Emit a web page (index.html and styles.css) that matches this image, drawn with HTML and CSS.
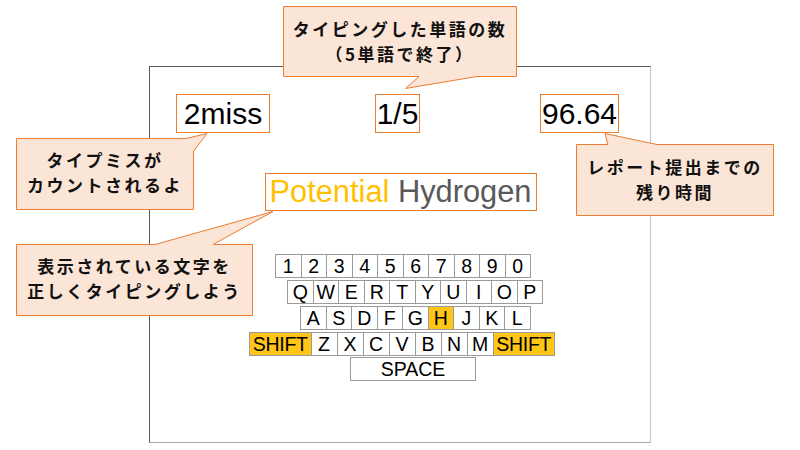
FILE: index.html
```html
<!DOCTYPE html>
<html lang="ja">
<head>
<meta charset="utf-8">
<title>Typing</title>
<link rel="stylesheet" href="styles.css">
</head>
<body>
<div class="stage">
  <div class="frame">
    <div class="stats">
      <div class="stat stat-miss">2miss</div>
      <div class="stat stat-count">1/5</div>
      <div class="stat stat-time">96.64</div>
    </div>
    <div class="word-wrap">
      <div class="word"><span class="typed">Potential</span> <span class="rest">Hydrogen</span></div>
    </div>
    <div class="keyboard">
      <div class="row row1">
        <div class="key">1</div><div class="key">2</div><div class="key">3</div><div class="key">4</div><div class="key">5</div><div class="key">6</div><div class="key">7</div><div class="key">8</div><div class="key">9</div><div class="key">0</div>
      </div>
      <div class="row row2">
        <div class="key">Q</div><div class="key">W</div><div class="key">E</div><div class="key">R</div><div class="key">T</div><div class="key">Y</div><div class="key">U</div><div class="key">I</div><div class="key">O</div><div class="key">P</div>
      </div>
      <div class="row row3">
        <div class="key">A</div><div class="key">S</div><div class="key">D</div><div class="key">F</div><div class="key">G</div><div class="key on">H</div><div class="key">J</div><div class="key">K</div><div class="key">L</div>
      </div>
      <div class="row row4">
        <div class="key shift on">SHIFT</div><div class="key wide">Z</div><div class="key wide">X</div><div class="key wide">C</div><div class="key wide">V</div><div class="key wide">B</div><div class="key wide">N</div><div class="key wide">M</div><div class="key shift on">SHIFT</div>
      </div>
      <div class="row row5">
        <div class="key space">SPACE</div>
      </div>
    </div>
  </div>

  <svg class="tails" width="800" height="450" viewBox="0 0 800 450">
    <path d="M283.5 6.5 H516.5 V76.5 H477 L405.5 88.5 L419 76.5 H283.5 Z"/>
    <path d="M16.5 138.5 H186 L207 133.5 L193.5 151 V209.5 H16.5 Z"/>
    <path d="M576.5 144.5 H608 L605 133.5 L657 144.5 H773.5 V215.5 H576.5 Z"/>
    <path d="M16.5 244.5 H155 L273 211.5 L213 244.5 H252.5 V315.5 H16.5 Z"/>
  </svg>

  <div class="note note-top">タイピングした単語の数<br>（5単語で終了）</div>
  <div class="note note-miss">タイプミスが<br>カウントされるよ</div>
  <div class="note note-time">レポート提出までの<br>残り時間</div>
  <div class="note note-word">表示されている文字を<br>正しくタイピングしよう</div>
</div>
</body>
</html>
```

FILE: styles.css
```css
* { box-sizing: border-box; }
html, body { margin: 0; padding: 0; background: #fff; }
body { font-family: "Liberation Sans", Arial, sans-serif; color: #000; }

.stage { position: relative; width: 800px; height: 450px; overflow: hidden; }

.frame {
  margin: 66px 0 0 149px;
  width: 502px;
  height: 377px;
  border-top: 1px solid #5a5a5a;
  border-left: 1px solid #5a5a5a;
  border-right: 1px solid #c4c4c4;
  border-bottom: 1px solid #a6a6a6;
  padding-top: 27px;
}

.stats {
  display: grid;
  grid-template-columns: 1fr auto 1fr;
  align-items: start;
  padding: 0 31px 0 26px;
}
.stat {
  height: 39px;
  border: 1px solid #ed7d31;
  background: #fff;
  font-size: 30px;
  line-height: 37px;
  text-align: center;
  white-space: nowrap;
}
.stat-miss { justify-self: start; width: 94px; }
.stat-count { justify-self: center; width: 45px; }
.stat-time { justify-self: end; width: 79px; }

.word-wrap { display: flex; justify-content: center; margin-top: 40px; padding-left: 1px; }
.word {
  width: 272px;
  height: 38px;
  border: 1px solid #ed7d31;
  font-size: 30.8px;
  line-height: 35px;
  text-align: center;
  white-space: nowrap;
}
.typed { color: #ffc000; }
.rest { color: #595959; }

.keyboard { margin-top: 43px; display: flex; flex-direction: column; gap: 2px; }
.row { display: flex; height: 24px; }
.row1 { margin-left: 125px; }
.row2 { margin-left: 137px; }
.row3 { margin-left: 150px; }
.row4 { margin-left: 99px; }
.row5 { margin-left: 200px; margin-top: -1px; }

.key {
  width: 26.5px;
  height: 24px;
  border: 1px solid #9a9a9a;
  background: #fff;
  font-size: 19.5px;
  line-height: 23px;
  text-align: center;
  flex: none;
}
.key + .key { margin-left: -1px; }
.key.wide { width: 27px; }
.key.shift { width: 62.5px; letter-spacing: -0.3px; }
.key.space { width: 126px; }
.key.on { background: #ffc517; }

.tails { position: absolute; left: 0; top: 0; }
.tails path { fill: #fbe5d6; stroke: #ed7d31; stroke-width: 1; stroke-linejoin: miter; }

.note {
  position: absolute;
  display: flex;
  align-items: center;
  justify-content: center;
  text-align: center;
  font-family: "Noto Sans CJK JP", "Noto Sans", sans-serif;
  font-weight: 700;
  font-size: 17px;
  letter-spacing: 2.5px;
  line-height: 25px;
  color: #111;
  padding-bottom: 2px;
}
.note-top { left: 284px; top: 7px; width: 232px; height: 69px; padding-bottom: 1px; }
.note-miss { left: 17px; top: 139px; width: 176px; height: 70px; padding-bottom: 4px; }
.note-time { left: 577px; top: 145px; width: 196px; height: 70px; }
.note-word { left: 17px; top: 245px; width: 235px; height: 70px; padding-bottom: 5px; }
```
